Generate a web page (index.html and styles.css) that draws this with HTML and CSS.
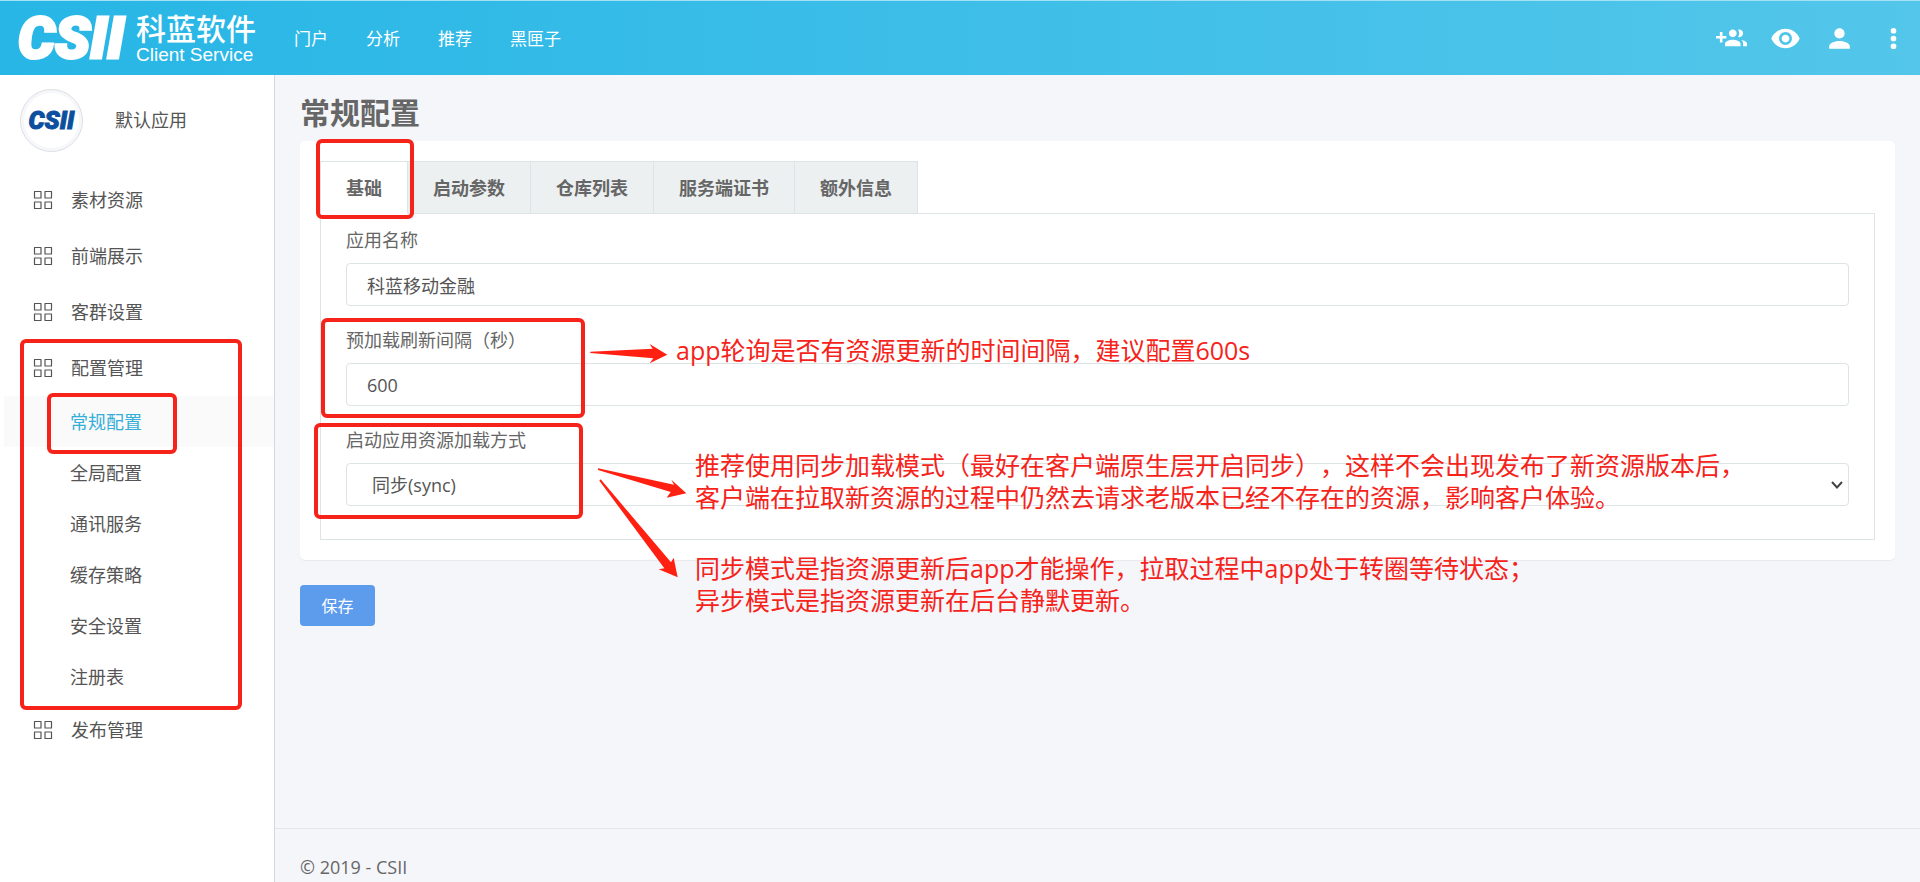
FILE: index.html
```html
<!DOCTYPE html>
<html lang="zh-CN">
<head>
<meta charset="utf-8">
<meta name="viewport" content="width=device-width, initial-scale=1">
<title>常规配置</title>
<link rel="stylesheet" href="styles.css">
</head>
<body>
<svg class="sprite" aria-hidden="true">
  <symbol id="grid" viewBox="0 0 20 20"><path d="M1.5 1.5h6.5v6.5h-6.5zM12 1.5h6.5v6.5h-6.5zM1.5 12h6.5v6.5h-6.5zM12 12h6.5v6.5h-6.5z" fill="none" stroke="currentColor" stroke-width="1.2" stroke-linejoin="round"/></symbol>
</svg>
<header class="topbar">
  <a class="brand" href="#">
    <span class="brand-mark">CSII</span>
    <span class="brand-name"><span class="brand-cn">科蓝软件</span><span class="brand-en">Client Service</span></span>
  </a>
  <nav class="topnav">
    <a href="#">门户</a><a href="#">分析</a><a href="#">推荐</a><a href="#">黑匣子</a>
  </nav>
  <div class="tools">
    <button class="tool" type="button" aria-label="添加成员"><svg viewBox="0 0 24 24"><path d="M8 10H5V7H3v3H0v2h3v3h2v-3h3v-2zm10 1c1.66 0 2.99-1.34 2.99-3S19.66 5 18 5c-.32 0-.63.05-.91.14.57.81.9 1.79.9 2.86s-.34 2.04-.9 2.86c.28.09.59.14.91.14zm-5 0c1.66 0 2.99-1.34 2.99-3S14.66 5 13 5c-1.66 0-3 1.34-3 3s1.34 3 3 3zm6.62 2.16c.83.73 1.38 1.66 1.38 2.84v2h3v-2c0-1.54-2.37-2.49-4.38-2.84zM13 13c-2 0-6 1-6 3v2h12v-2c0-2-4-3-6-3z"/></svg></button>
    <button class="tool" type="button" aria-label="预览"><svg viewBox="0 0 24 24"><path d="M12 4.5C7 4.5 2.73 7.61 1 12c1.73 4.39 6 7.5 11 7.5s9.27-3.11 11-7.5c-1.73-4.39-6-7.5-11-7.5zM12 17c-2.76 0-5-2.24-5-5s2.24-5 5-5 5 2.24 5 5-2.24 5-5 5zm0-8c-1.66 0-3 1.34-3 3s1.34 3 3 3 3-1.34 3-3-1.34-3-3-3z"/></svg></button>
    <button class="tool" type="button" aria-label="用户"><svg viewBox="0 0 24 24"><path d="M12 12c2.21 0 4-1.79 4-4s-1.79-4-4-4-4 1.79-4 4 1.790 4 4 4zm0 2c-2.670 0-8 1.340-8 4v2h16v-2c0-2.660-5.330-4-8-4z"/></svg></button>
    <button class="tool" type="button" aria-label="更多"><svg viewBox="0 0 24 24"><circle cx="12" cy="6" r="2.200"/><circle cx="12" cy="12" r="2.200"/><circle cx="12" cy="18" r="2.200"/></svg></button>
  </div>
</header>
<div class="layout">
  <aside class="sidebar">
    <div class="app">
      <span class="avatar">CSII</span>
      <span class="app-name">默认应用</span>
    </div>
    <nav class="menu">
      <a class="item" href="#"><svg class="grid-icon"><use href="#grid"/></svg>素材资源</a>
      <a class="item" href="#"><svg class="grid-icon"><use href="#grid"/></svg>前端展示</a>
      <a class="item" href="#"><svg class="grid-icon"><use href="#grid"/></svg>客群设置</a>
      <a class="item" href="#"><svg class="grid-icon"><use href="#grid"/></svg>配置管理</a>
      <a class="sub active" href="#">常规配置</a>
      <a class="sub" href="#">全局配置</a>
      <a class="sub" href="#">通讯服务</a>
      <a class="sub" href="#">缓存策略</a>
      <a class="sub" href="#">安全设置</a>
      <a class="sub" href="#">注册表</a>
      <a class="item" href="#"><svg class="grid-icon"><use href="#grid"/></svg>发布管理</a>
    </nav>
  </aside>
  <div class="page">
    <main class="content">
      <h1 class="title">常规配置</h1>
      <form>
        <section class="card">
          <div class="tabs" role="tablist">
            <button class="tab selected" type="button" role="tab" aria-selected="true">基础</button>
            <button class="tab" type="button" role="tab">启动参数</button>
            <button class="tab" type="button" role="tab">仓库列表</button>
            <button class="tab" type="button" role="tab">服务端证书</button>
            <button class="tab" type="button" role="tab">额外信息</button>
          </div>
          <div class="panel">
            <div class="field">
              <label for="name">应用名称</label>
              <input class="control" id="name" type="text" value="科蓝移动金融">
            </div>
            <div class="field">
              <label for="interval">预加载刷新间隔（秒）</label>
              <input class="control" id="interval" type="text" value="600">
            </div>
            <div class="field">
              <label for="mode">启动应用资源加载方式</label>
              <div class="select-wrap">
                <select class="control select" id="mode"><option>同步(sync)</option><option>异步(async)</option></select>
                <svg class="chevron" viewBox="0 0 12 10"><path d="M1 2l5 5.500 5-5.500" fill="none" stroke="#444" stroke-width="2"/></svg>
              </div>
            </div>
          </div>
        </section>
        <button class="save" type="submit">保存</button>
      </form>
    </main>
    <footer class="footer">© 2019 - CSII</footer>
  </div>
</div>
<div class="notes">
  <div class="mark mark-menu"></div>
  <div class="mark mark-sub"></div>
  <div class="mark mark-tab"></div>
  <div class="mark mark-interval"></div>
  <div class="mark mark-mode"></div>
  <svg class="arrows" viewBox="0 0 1500 1020" aria-hidden="true">
    <path d="M901 125L1088 116L1079 102L1132 134L1079 160L1090 145L901 129Z"/>
    <path d="M924 475L1152 524L1144 509L1189 550L1130 563L1142 546L924 480Z"/>
    <path d="M932 508L1143 757L1151 743L1163 802L1106 778L1123 775L928 512Z"/>
  </svg>
  <p class="note note-interval">app轮询是否有资源更新的时间间隔，建议配置600s</p>
  <p class="note note-sync">推荐使用同步加载模式（最好在客户端原生层开启同步），这样不会出现发布了新资源版本后，<br>客户端在拉取新资源的过程中仍然去请求老版本已经不存在的资源，影响客户体验。</p>
  <p class="note note-mode">同步模式是指资源更新后app才能操作，拉取过程中app处于转圈等待状态；<br>异步模式是指资源更新在后台静默更新。</p>
</div>
</body>
</html>
```
FILE: styles.css
```css
* { box-sizing: border-box; }
body {
  margin: 0;
  min-height: 100vh;
  display: flex;
  flex-direction: column;
  position: relative;
  background: #f5f6fa;
  color: #666;
  font: 18px/24px "Open Sans", "Noto Sans CJK SC", sans-serif;
  text-spacing-trim: space-all;
}
a { color: inherit; text-decoration: none; }
button, input, select { font: inherit; color: inherit; }
.sprite { position: absolute; width: 0; height: 0; }

.topbar {
  height: 75px;
  flex: none;
  display: flex;
  align-items: center;
  padding: 0 11px 0 18px;
  border-top: 1px solid #a5e1f5;
  background: linear-gradient(90deg, #27b6e6, #53c6ea);
  color: #fff;
}
.brand { display: flex; align-items: center; width: 276px; gap: 12px; }
.brand-mark { width: 106px; font: italic 900 58px/58px Roboto, sans-serif; -webkit-text-stroke: 3px #fff; }
.brand-name { display: flex; flex-direction: column; white-space: nowrap; }
.brand-cn { font-size: 30px; font-weight: 500; line-height: 32px; }
.brand-en { font: 19px/19px "Liberation Sans", sans-serif; }
.topnav { display: flex; gap: 38px; padding-top: 2px; font-size: 17px; }
.tools { display: flex; gap: 23px; margin-left: auto; }
.tool { width: 31px; height: 31px; padding: 0; border: 0; background: none; }
.tool svg { display: block; width: 31px; height: 31px; fill: #fff; }

.layout { flex: 1; display: flex; }
.sidebar { width: 275px; flex: none; background: #fff; border-right: 1px solid #d5d7dc; color: #555; }
.app { display: flex; align-items: center; gap: 32px; padding: 14px 20px 20px; }
.app-name { padding-bottom: 2px; }
.avatar {
  width: 63px;
  height: 63px;
  display: flex;
  align-items: center;
  justify-content: center;
  border: 1px solid #dcdde2;
  border-radius: 50%;
  box-shadow: inset 0 0 0 3px #f6f7fb;
  color: #0c4f9e;
  font: italic 900 25px/25px Roboto, sans-serif;
  -webkit-text-stroke: 1px #0c4f9e;
}
.menu { display: flex; flex-direction: column; }
.item { display: flex; align-items: center; height: 56px; padding-left: 33px; gap: 18px; }
.grid-icon { width: 20px; height: 20px; }
.sub { display: flex; align-items: center; height: 51px; margin-left: 4px; padding-left: 66px; }
.sub.active { background: #fafafa; color: #35aed8; }

.page { flex: 1; min-width: 0; display: flex; flex-direction: column; }
.content { padding: 18px 25px 25px; }
.title { margin: 0 0 8px; font-size: 30px; line-height: 40px; }
.card { padding: 20px; background: #fff; border-radius: 5px; box-shadow: 0 1px 1px #e8eaee; }
.tabs { display: flex; }
.tab {
  height: 53px;
  padding: 1px 25px 0;
  border: 1px solid #dde4e6;
  border-left: 0;
  margin-bottom: -1px;
  background: #ecf0f1;
  font-weight: 700;
}
.tab.selected { background: #fff; border-left: 1px solid #dde4e6; border-bottom-color: #fff; }
.panel { border: 1px solid #dde4e6; padding: 14px 25px 33px; }
.field { display: flex; flex-direction: column; gap: 11px; }
.field + .field { margin-top: 22px; }
.control {
  width: 100%;
  height: 43px;
  padding: 0 20px;
  border: 1px solid #dde4e6;
  border-radius: 4px;
  background: #fff;
  color: #555;
}
.select-wrap { position: relative; display: flex; }
.select { appearance: none; padding-left: 25px; }
.chevron { position: absolute; right: 6px; top: 17px; width: 12px; height: 10px; }
.save {
  width: 75px;
  height: 41px;
  margin-top: 25px;
  border: 0;
  border-radius: 4px;
  background: #5d9cec;
  color: #fff;
  font-size: 16px;
}
.footer { margin-top: auto; height: 54px; padding: 26px 25px 0; border-top: 1px solid #e4e6ea; }

.notes { position: absolute; inset: 0; pointer-events: none; color: #f5231a; }
.mark { position: absolute; border: 4px solid #f5231a; border-radius: 6px; }
.mark-menu { left: 20px; top: 339px; width: 222px; height: 371px; }
.mark-sub { left: 47px; top: 393px; width: 130px; height: 61px; }
.mark-tab { left: 316px; top: 139px; width: 98px; height: 80px; }
.mark-interval { left: 321px; top: 318px; width: 264px; height: 100px; }
.mark-mode { left: 314px; top: 423px; width: 269px; height: 96px; }
.arrows { position: absolute; left: 290px; top: 310px; width: 500px; height: 340px; fill: #ff2012; }
.note { position: absolute; margin: 0; font-size: 25px; line-height: 32px; white-space: nowrap; }
.note-interval { left: 676px; top: 334px; }
.note-sync { left: 695px; top: 449px; }
.note-mode { left: 695px; top: 552px; }
```
